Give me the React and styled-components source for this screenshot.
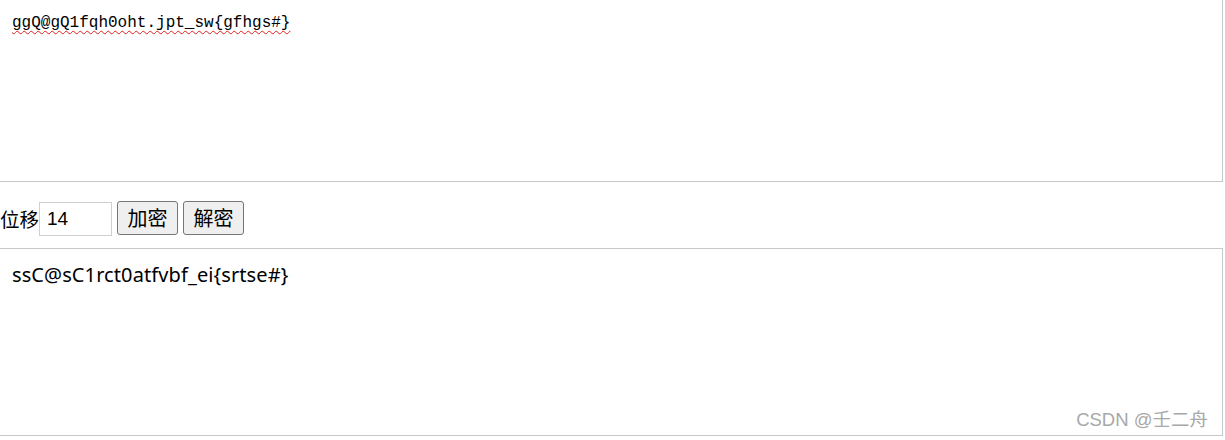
import React, { useState } from "react";
import styled, { createGlobalStyle } from "styled-components";

const GlobalStyle = createGlobalStyle`
  html, body {
    margin: 0;
    padding: 0;
    background: #ffffff;
  }
  body {
    font-family: "Liberation Sans", "Noto Sans CJK SC", sans-serif;
    color: #000;
  }
`;

const shift = (text, n) =>
  text.replace(/[a-z]/gi, (ch) => {
    const base = ch <= "Z" ? 65 : 97;
    return String.fromCharCode(((ch.charCodeAt(0) - base + n + 26 * 10) % 26) + base);
  });

const App = () => {
  const [source, setSource] = useState("ggQ@gQ1fqh0oht.jpt_sw{gfhgs#}");
  const [offset, setOffset] = useState("14");
  const [result, setResult] = useState("ssC@sC1rct0atfvbf_ei{srtse#}");

  const n = parseInt(offset, 10) || 0;

  return (
    <Page>
      <GlobalStyle />
      <SourceArea
        value={source}
        spellCheck={false}
        onChange={(e) => setSource(e.target.value)}
      />
      <Controls>
        <Label>位移</Label>
        <OffsetInput value={offset} onChange={(e) => setOffset(e.target.value)} />
        <Button onClick={() => setResult(shift(source, n))}>加密</Button>
        <Button onClick={() => setResult(shift(source, -n))}>解密</Button>
      </Controls>
      <ResultArea
        value={result}
        spellCheck={false}
        onChange={(e) => setResult(e.target.value)}
      />
      <Watermark>CSDN @壬二舟</Watermark>
    </Page>
  );
};

export default App;

const Page = styled.div`
  position: relative;
  width: 1225px;
  height: 440px;
  overflow: hidden;
`;

const TextBox = styled.textarea`
  display: block;
  box-sizing: border-box;
  width: 1223px;
  margin: 0;
  padding: 12px 12px;
  border: 1px solid #c8c8c8;
  border-left: 0;
  resize: none;
  outline: none;
  background: #fff;
  color: #000;
`;

const SourceArea = styled(TextBox)`
  height: 182px;
  border-top: 0;
  padding-top: 13px;
  font-family: "Liberation Mono", "Noto Sans CJK SC", monospace;
  font-size: 16px;
  line-height: 20px;
  text-decoration: underline wavy #e02020;
  text-decoration-thickness: 1px;
  text-underline-offset: 3px;
`;

const ResultArea = styled(TextBox)`
  height: 188px;
  padding-top: 13px;
  font-family: "Noto Sans", "Noto Sans CJK SC", sans-serif;
  font-size: 20px;
  letter-spacing: 0.1px;
  line-height: 26px;
`;

const Controls = styled.div`
  display: flex;
  align-items: flex-start;
  height: 35px;
  margin: 19px 0 12px;
`;

const Label = styled.span`
  font-family: "Noto Sans CJK SC", sans-serif;
  font-size: 19.5px;
  line-height: 35px;
  color: #000;
`;

const OffsetInput = styled.input`
  box-sizing: border-box;
  width: 73px;
  height: 34px;
  margin: 1px 5px 0 0;
  padding: 0 7px;
  border: 1px solid #cfcfcf;
  outline: none;
  font-family: "Liberation Sans", sans-serif;
  font-size: 19px;
  color: #000;
`;

const Button = styled.button`
  box-sizing: border-box;
  width: 61px;
  height: 34px;
  margin-right: 5px;
  padding: 0;
  border: 1px solid #767676;
  border-radius: 3px;
  background: #efefef;
  font-family: "Noto Sans CJK SC", sans-serif;
  font-size: 20px;
  line-height: 30px;
  color: #000;
`;

const Watermark = styled.div`
  position: absolute;
  right: 17px;
  bottom: 9px;
  font-family: "Liberation Sans", "Noto Sans CJK SC", sans-serif;
  font-size: 18.5px;
  color: #a8a8a8;
`;
